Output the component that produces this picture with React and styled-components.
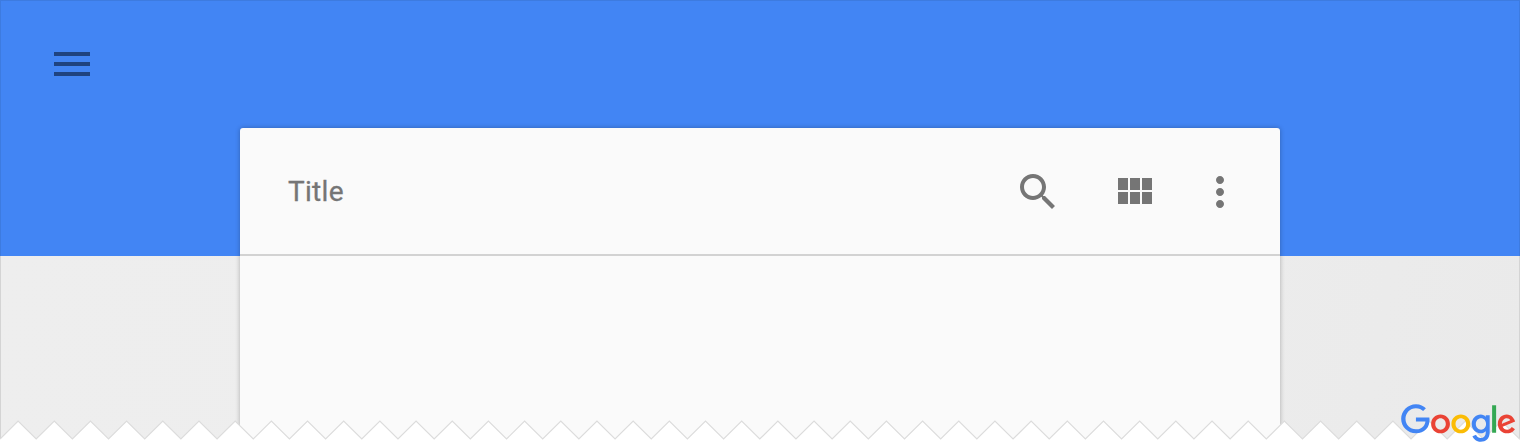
import React from 'react'
import styled, { createGlobalStyle } from 'styled-components'

const Global = createGlobalStyle`
  html, body {
    margin: 0;
    padding: 0;
    background: #fff;
  }
  body {
    font-family: Roboto, "Liberation Sans", sans-serif;
  }
`

const Page = styled.div`
  position: relative;
  width: 1520px;
  height: 442px;
  overflow: hidden;
  background: linear-gradient(100deg, #eeeeee 0%, #ededed 70%, #eaeaea 100%);
  box-shadow: inset 1px 0 0 #d4d4d4, inset -1px 0 0 #d4d4d4;
`

const Header = styled.header`
  box-sizing: border-box;
  height: 256px;
  padding: 40px 48px;
  background: #4285f4;
  box-shadow: inset 0 1px 0 #3d7be0, inset 1px 0 0 #3d7be0, inset -1px 0 0 #3d7be0;
`

const Icon = styled.svg`
  display: block;
  flex: none;
  width: 48px;
  height: 48px;
  margin-left: ${p => p.$offset || 0}px;
  fill: ${p => p.$color || '#757575'};
`

const Card = styled.section`
  position: relative;
  width: 1040px;
  height: 400px;
  margin: -128px auto 0;
  background: #fafafa;
  border-radius: 3px 3px 0 0;
  box-shadow: 0 0 5px rgba(0, 0, 0, 0.28);
`

const CardBar = styled.div`
  box-sizing: border-box;
  display: flex;
  align-items: center;
  height: 128px;
  padding: 2px 36px 0 48px;
  border-bottom: 2px solid #d2d2d2;
`

const Title = styled.h1`
  flex: 1;
  margin: 0;
  font-size: 28px;
  font-weight: 400;
  line-height: 32px;
  letter-spacing: 0.3px;
  color: #757575;
  -webkit-text-stroke: 0.3px #757575;
`

const Zigzag = styled.svg`
  position: absolute;
  left: 0;
  bottom: 0;
  display: block;
`

const Logo = styled.svg`
  position: absolute;
  left: 1401px;
  top: 404px;
  display: block;
`

const PERIOD = 36.18
const PEAK = 421
const VALLEY = 439

// teeth along the bottom edge of the page
const teeth = () => {
  const pts = []
  for (let i = 0; i < 44; i++) {
    pts.push(`${(i * PERIOD).toFixed(2)},${VALLEY - 412}`)
    pts.push(`${(i * PERIOD + PERIOD / 2).toFixed(2)},${PEAK - 412}`)
  }
  return pts
}

const App = () => {
  const pts = teeth()
  return (
    <Page>
      <Global />
      <Header>
        <Icon viewBox="0 0 24 24" $color="#1f4380">
          <path d="M3 18h18v-2H3v2zm0-5h18v-2H3v2zm0-7v2h18V6H3z" />
        </Icon>
      </Header>
      <Card>
        <CardBar>
          <Title>Title</Title>
          <Icon viewBox="0 0 24 24">
            <path d="M15.5 14h-.79l-.28-.27C15.41 12.59 16 11.11 16 9.5 16 5.91 13.09 3 9.5 3S3 5.91 3 9.5 5.91 16 9.5 16c1.61 0 3.09-.59 4.23-1.57l.27.28v.79l5 4.99L20.49 19l-4.99-5zm-6 0C7.01 14 5 11.99 5 9.5S7.01 5 9.5 5 14 7.01 14 9.5 11.99 14 9.5 14z" />
          </Icon>
          <Icon viewBox="0 0 24 24" $offset={48}>
            <path d="M4 11h5V5H4v6zm0 7h5v-6H4v6zm6 0h5v-6h-5v6zm6 0h5v-6h-5v6zm-6-7h5V5h-5v6zm6-6v6h5V5h-5z" />
          </Icon>
          <Icon viewBox="0 0 24 24" $offset={38}>
            <path d="M12 8c1.1 0 2-.9 2-2s-.9-2-2-2-2 .9-2 2 .9 2 2 2zm0 2c-1.1 0-2 .9-2 2s.9 2 2 2 2-.9 2-2-.9-2-2-2zm0 6c-1.1 0-2 .9-2 2s.9 2 2 2 2-.9 2-2-.9-2-2-2z" />
          </Icon>
        </CardBar>
      </Card>
      <Zigzag width="1520" height="30" viewBox="0 0 1520 30">
        <polygon points={`${pts.join(' ')} 1600,40 0,40`} fill="#fff" />
        <polyline points={pts.join(' ')} fill="none" stroke="#dcdcdc" strokeWidth="1.2" />
      </Zigzag>
      <Logo width="115" height="38.9" viewBox="0 0 272 92">
        <path fill="#EA4335" d="M115.75 47.18c0 12.77-9.99 22.18-22.25 22.18s-22.25-9.41-22.25-22.18C71.25 34.32 81.24 25 93.5 25s22.25 9.32 22.25 22.18zm-9.74 0c0-7.98-5.79-13.44-12.51-13.44S80.99 39.2 80.99 47.18c0 7.9 5.79 13.44 12.51 13.44s12.51-5.55 12.51-13.44z" />
        <path fill="#FBBC05" d="M163.75 47.18c0 12.77-9.99 22.18-22.25 22.18s-22.25-9.41-22.25-22.18c0-12.85 9.99-22.18 22.25-22.18s22.25 9.32 22.25 22.18zm-9.74 0c0-7.98-5.79-13.44-12.51-13.44s-12.51 5.46-12.51 13.44c0 7.9 5.79 13.44 12.51 13.44s12.51-5.55 12.51-13.44z" />
        <path fill="#4285F4" d="M209.75 26.34v39.82c0 16.38-9.66 23.07-21.08 23.07-10.75 0-17.22-7.19-19.66-13.07l8.48-3.53c1.51 3.61 5.21 7.87 11.17 7.87 7.31 0 11.84-4.51 11.84-13v-3.19h-.34c-2.18 2.69-6.38 5.04-11.68 5.04-11.09 0-21.25-9.66-21.25-22.09 0-12.52 10.16-22.26 21.25-22.26 5.29 0 9.49 2.35 11.68 4.96h.34v-3.61h9.25zm-8.56 20.92c0-7.81-5.21-13.52-11.84-13.52-6.72 0-12.35 5.71-12.35 13.52 0 7.73 5.63 13.36 12.35 13.36 6.63 0 11.84-5.63 11.84-13.36z" />
        <path fill="#34A853" d="M225 3v65h-9.5V3h9.5z" />
        <path fill="#EA4335" d="M262.02 54.48l7.56 5.04c-2.44 3.61-8.32 9.83-18.48 9.83-12.6 0-22.01-9.74-22.01-22.18 0-13.19 9.49-22.18 20.92-22.18 11.51 0 17.14 9.16 18.98 14.11l1.01 2.52-29.65 12.28c2.27 4.45 5.8 6.72 10.75 6.72 4.96 0 8.4-2.44 10.92-6.14zm-23.27-7.98l19.82-8.23c-1.09-2.77-4.37-4.7-8.23-4.7-4.95 0-11.84 4.37-11.59 12.93z" />
        <path fill="#4285F4" d="M35.29 41.41V32H67c.31 1.64.47 3.58.47 5.68 0 7.06-1.93 15.79-8.15 22.01-6.05 6.3-13.78 9.66-24.02 9.66C16.32 69.35.36 53.89.36 34.91.36 15.93 16.32.47 35.3.47c10.5 0 17.98 4.12 23.6 9.49l-6.64 6.64c-4.03-3.78-9.49-6.72-16.97-6.72-13.86 0-24.7 11.17-24.7 25.03 0 13.86 10.84 25.03 24.7 25.03 8.99 0 14.11-3.61 17.39-6.89 2.66-2.66 4.41-6.46 5.1-11.65l-22.49.01z" />
      </Logo>
    </Page>
  )
}

export default App
